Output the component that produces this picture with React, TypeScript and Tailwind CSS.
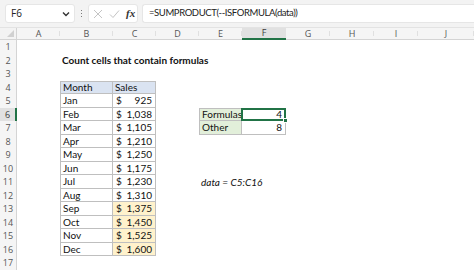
import React from "react";

const COLS = ["A", "B", "C", "D", "E", "F", "G", "H", "I", "J"];
const DATA: [string, string][] = [
  ["Jan", "925"],
  ["Feb", "1,038"],
  ["Mar", "1,105"],
  ["Apr", "1,210"],
  ["May", "1,250"],
  ["Jun", "1,175"],
  ["Jul", "1,230"],
  ["Aug", "1,310"],
  ["Sep", "1,375"],
  ["Oct", "1,450"],
  ["Nov", "1,525"],
  ["Dec", "1,600"],
];

function Toolbar() {
  return (
    <div className="h-[28px] bg-[#f3f3f3] flex items-center pl-[5px] border-b border-[#e3e3e3]">
      <div className="w-[70px] h-[19px] bg-white rounded-[3px] border border-[#e6e6e6] flex items-center justify-between pl-[5px] pr-[4px]">
        <span className="text-[10px] text-[#222] font-['Open_Sans',sans-serif]">F6</span>
        <svg width="8" height="6" viewBox="0 0 8 6">
          <path d="M1 1.5 L4 4.5 L7 1.5" fill="none" stroke="#333" strokeWidth="1.4" />
        </svg>
      </div>
      <div className="w-[13px] flex flex-col items-center gap-[1.5px]">
        <div className="w-[1.5px] h-[1.5px] bg-[#555] rounded-full" />
        <div className="w-[1.5px] h-[1.5px] bg-[#555] rounded-full" />
        <div className="w-[1.5px] h-[1.5px] bg-[#555] rounded-full" />
      </div>
      <div className="w-[50px] h-[19px] bg-white rounded-[3px] border border-[#e6e6e6] flex items-center pl-[4px] gap-[6px]">
        <svg width="10" height="10" viewBox="0 0 10 10">
          <path d="M1 1 L9 9 M9 1 L1 9" fill="none" stroke="#c4c4c4" strokeWidth="1" />
        </svg>
        <svg width="11" height="10" viewBox="0 0 11 10">
          <path d="M1 5.5 L4 8.5 L10 1.5" fill="none" stroke="#c4c4c4" strokeWidth="1" />
        </svg>
        <span className="text-[11px] italic font-bold text-[#333] font-['Liberation_Serif',serif] leading-none">fx</span>
      </div>
      <div className="ml-[4px] flex-1 h-[19px] bg-white rounded-l-[3px] border border-[#e6e6e6] border-r-0 flex items-center pl-[6px]">
        <span className="text-[9.5px] text-[#222] font-['Lato',sans-serif] tracking-[-0.4px] whitespace-nowrap">=SUMPRODUCT(--ISFORMULA(data))</span>
      </div>
    </div>
  );
}

function HeaderRow() {
  return (
    <>
      <div className="bg-[#f3f3f3] border-b border-r border-[#d4d4d4] relative">
        <svg className="absolute right-[2px] bottom-[2px]" width="7" height="7" viewBox="0 0 7 7">
          <path d="M7 0 L7 7 L0 7 Z" fill="#d0d0d0" />
        </svg>
      </div>
      {COLS.map((c) =>
        c === "F" ? (
          <div
            key={c}
            className="bg-[#e1e1e1] border-b-2 border-[#217346] flex items-center justify-center text-[9px] text-[#3c3c3c] font-['Open_Sans',sans-serif]"
          >
            {c}
          </div>
        ) : (
          <div
            key={c}
            className="bg-[#f5f5f5] border-b border-[#d4d4d4] flex items-center justify-center text-[9px] text-[#555] font-['Open_Sans',sans-serif] relative"
          >
            {c}
            <div className="absolute right-0 top-[3px] bottom-[3px] w-px bg-[#e0e0e0]" />
          </div>
        )
      )}
    </>
  );
}

function RowHeader({ r }: { r: number }) {
  if (r === 6) {
    return (
      <div className="bg-[#e1e1e1] border-r-2 border-[#217346] flex items-center justify-center text-[9px] text-[#3c3c3c] font-['Open_Sans',sans-serif]">
        {r}
      </div>
    );
  }
  return (
    <div className="bg-[#f5f5f5] border-r border-[#d4d4d4] flex items-center justify-center text-[9px] text-[#555] font-['Open_Sans',sans-serif]">
      {r}
    </div>
  );
}

function Cell({ r, c }: { r: number; c: string }) {
  const base = "flex items-center text-[10px] text-[#111] leading-none whitespace-nowrap";
  if (r === 2 && c === "B") {
    return (
      <div className={base + " pl-[2px] text-[10.3px] font-bold overflow-visible relative z-10"}>Count cells that contain formulas</div>
    );
  }
  if (r === 4 && c === "B") {
    return <div className={base + " pl-[2px] bg-[#dae3f1] border border-[#bfbfbf]"}>Month</div>;
  }
  if (r === 4 && c === "C") {
    return <div className={base + " pl-[2px] bg-[#dae3f1] border-t border-r border-b border-[#bfbfbf]"}>Sales</div>;
  }
  if (r >= 5 && r <= 16 && c === "B") {
    return <div className={base + " pl-[2px] border-l border-r border-b border-[#bfbfbf]"}>{DATA[r - 5][0]}</div>;
  }
  if (r >= 5 && r <= 16 && c === "C") {
    const yellow = r >= 13;
    return (
      <div
        className={
          base +
          " justify-between pl-[3px] pr-[3px] border-r border-b border-[#bfbfbf] " +
          (yellow ? "bg-[#fff2cc]" : "bg-white")
        }
      >
        <span>$</span>
        <span>{DATA[r - 5][1]}</span>
      </div>
    );
  }
  if (r === 6 && c === "E") {
    return <div className={base + " pl-[2px] bg-[#e2efda] border border-[#bfbfbf]"}>Formulas</div>;
  }
  if (r === 7 && c === "E") {
    return <div className={base + " pl-[2px] bg-[#e2efda] border-l border-r border-b border-[#bfbfbf]"}>Other</div>;
  }
  if (r === 6 && c === "F") {
    return (
      <div className={base + " justify-end pr-[3px] border-t border-r border-b border-[#bfbfbf] relative"}>
        4
        <div className="absolute -left-[1px] -top-[1px] -right-[1px] -bottom-[1px] border-2 border-[#217346]" />
        <div className="absolute -right-[3px] -bottom-[3px] w-[5px] h-[5px] bg-[#217346] border border-white" />
      </div>
    );
  }
  if (r === 7 && c === "F") {
    return <div className={base + " justify-end pr-[3px] border-r border-b border-[#bfbfbf]"}>8</div>;
  }
  if (r === 11 && c === "E") {
    return <div className={base + " pl-[2px] italic overflow-visible relative z-10"}>data = C5:C16</div>;
  }
  return <div className="bg-white" />;
}

export default function App() {
  const rows = Array.from({ length: 17 }, (_, i) => i + 1);
  return (
    <div className="w-[474px] h-[270px] overflow-hidden bg-white font-['Lato',sans-serif]">
      <Toolbar />
      <div className="grid grid-cols-[17px_43px_53px_43px_43px_43px_44px_44px_44px_44px_1fr] grid-rows-[12px_repeat(17,13.5px)]">
        <HeaderRow />
        {rows.map((r) => (
          <React.Fragment key={r}>
            <RowHeader r={r} />
            {COLS.map((c) => (
              <Cell key={c} r={r} c={c} />
            ))}
          </React.Fragment>
        ))}
      </div>
    </div>
  );
}
